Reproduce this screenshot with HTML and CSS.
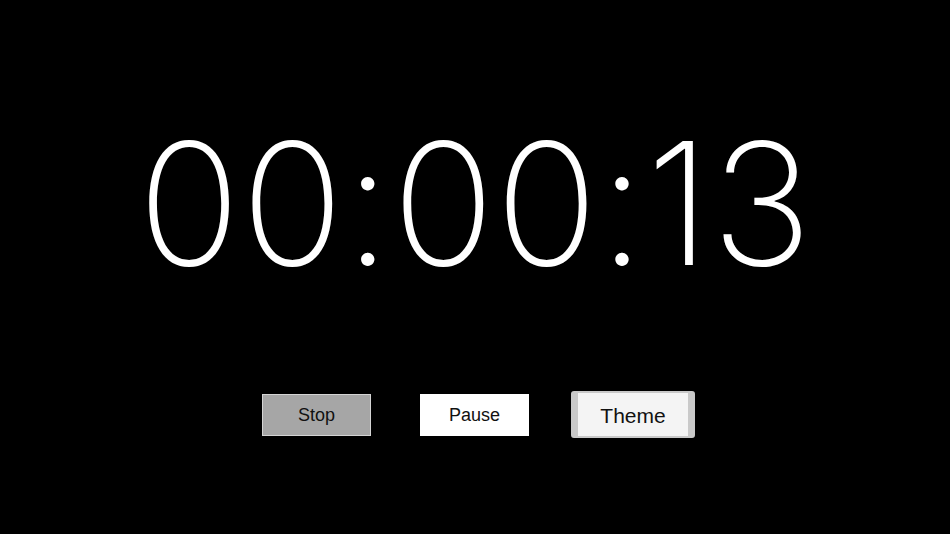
FILE: index.html
```
<!DOCTYPE html>
<html>
<head>
<meta charset="utf-8">
<link rel="stylesheet" href="styles.css">
</head>
<body>
<main class="app">
  <div class="clock">00:00:13</div>
  <div class="controls">
    <button class="btn btn-stop">Stop</button>
    <button class="btn btn-pause">Pause</button>
    <button class="btn btn-theme">Theme</button>
  </div>
</main>
</body>
</html>
```
FILE: styles.css
```
html, body {
  margin: 0;
  padding: 0;
  background: #000;
  width: 950px;
  height: 534px;
  overflow: hidden;
}
.app {
  display: flex;
  flex-direction: column;
  align-items: center;
  padding-top: 100px;
}
.clock {
  font-family: Inter, "Liberation Sans", sans-serif;
  font-weight: 250;
  font-size: 170px;
  line-height: 206px;
  color: #fff;
  letter-spacing: 0.6px;
  margin-right: -0.6px;
}
.controls {
  display: flex;
  align-items: center;
  gap: 49px;
  margin-top: 85px;
  margin-left: 7px;
}
.btn {
  font-family: "Liberation Sans", Arial, sans-serif;
  color: #111;
  font-size: 18px;
  width: 109px;
  height: 42px;
  padding: 2px 0 0;
  box-sizing: border-box;
  border-radius: 0;
}
.btn-stop {
  background: #a6a6a6;
  border: 1px solid #d4d4d4;
}
.btn-pause {
  background: #fff;
  border: 1px solid #fff;
}
.btn-theme {
  width: 124px;
  height: 47px;
  margin-left: -7px;
  font-size: 21px;
  background: #f4f4f4;
  border-style: solid;
  border-color: #c9c9c9;
  border-width: 2px 7px;
  border-radius: 3px;
}
```
